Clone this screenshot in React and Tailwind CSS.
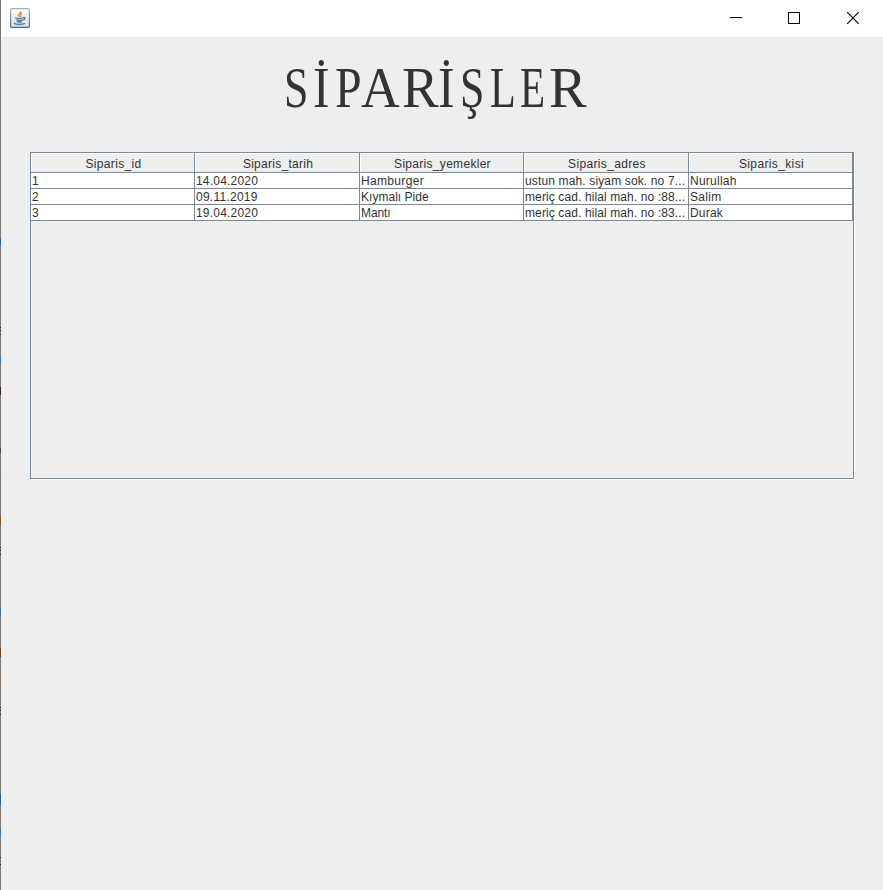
const title = [
  ["S", "w-[29px]", "scale-x-[0.77]"],
  ["İ", "w-[22px]", "scale-x-[0.87]"],
  ["P", "w-[26px]", "scale-x-[0.84]"],
  ["A", "w-[41px]", "scale-x-[0.94]"],
  ["R", "w-[36px]", "scale-x-[0.96]"],
  ["İ", "w-[22px]", "scale-x-[0.87]"],
  ["Ş", "w-[30px]", "scale-x-[0.77]"],
  ["L", "w-[30px]", "scale-x-[0.74]"],
  ["E", "w-[29px]", "scale-x-[0.72]"],
  ["R", "w-[38px]", "scale-x-[0.99]"],
];

const headers = [
  ["Siparis_id", "tracking-[0.35px]"],
  ["Siparis_tarih", "tracking-[0.27px]"],
  ["Siparis_yemekler", "tracking-[0.3px]"],
  ["Siparis_adres", "tracking-[0.35px]"],
  ["Siparis_kisi", "tracking-[0.37px]"],
];

const rows = [
  [["1", ""], ["14.04.2020", "tracking-[0.2px]"], ["Hamburger", "tracking-[0.33px]"], ["ustun mah. siyam sok. no 7...", "tracking-[0.14px]"], ["Nurullah", "tracking-[0.25px]"]],
  [["2", ""], ["09.11.2019", "tracking-[0.25px]"], ["Kıymalı Pide", "tracking-[0.03px]"], ["meriç cad. hilal mah. no :88...", "tracking-[0.11px]"], ["Salim", "tracking-[0.3px]"]],
  [["3", ""], ["19.04.2020", "tracking-[0.2px]"], ["Mantı", "tracking-[-0.1px]"], ["meriç cad. hilal mah. no :83...", "tracking-[0.11px]"], ["Durak", "tracking-[0.2px]"]],
];

// Slivers of the window behind, showing along the left edge: [gap above, height, colour].
const edgeMarks = [
  ["mt-[238px]", "h-[7px]", "bg-[#2f5f92]"],
  ["mt-[82px]", "h-px", "bg-[#222222]"],
  ["mt-[2px]", "h-px", "bg-[#222222]"],
  ["mt-[3px]", "h-px", "bg-[#222222]"],
  ["mt-[22px]", "h-[7px]", "bg-[#3f7095]"],
  ["mt-[23px]", "h-[8px]", "bg-[#431f3d]"],
  ["mt-[53px]", "h-[2px]", "bg-[#66401f]"],
  ["mt-0", "h-[3px]", "bg-[#244f7c]"],
  ["mt-[24px]", "h-px", "bg-[#8b6936]"],
  ["mt-[36px]", "h-px", "bg-[#8b5a26]"],
  ["mt-[2px]", "h-[8px]", "bg-[#80501f]"],
  ["mt-[22px]", "h-px", "bg-[#222222]"],
  ["mt-[2px]", "h-px", "bg-[#222222]"],
  ["mt-[3px]", "h-px", "bg-[#222222]"],
  ["mt-[53px]", "h-[7px]", "bg-[#3f6c9b]"],
  ["mt-[33px]", "h-[8px]", "bg-[#704a20]"],
  ["mt-0", "h-px", "bg-[#203f70]"],
  ["mt-[23px]", "h-[3px]", "bg-[#9a7439]"],
  ["mt-[24px]", "h-px", "bg-[#222222]"],
  ["mt-[2px]", "h-px", "bg-[#222222]"],
  ["mt-[3px]", "h-px", "bg-[#222222]"],
  ["mt-[79px]", "h-[11px]", "bg-[#315f8d]"],
  ["mt-[23px]", "h-[7px]", "bg-[#3f6c9b]"],
  ["mt-[22px]", "h-px", "bg-[#222222]"],
  ["mt-[6px]", "h-px", "bg-[#222222]"],
];

const columns = "grid grid-cols-[164px_165px_164px_165px_164px]";

function JavaIcon() {
  return (
    <svg width="20" height="20" viewBox="0 0 20 20">
      <defs>
        <linearGradient id="tile" x1="0" y1="0" x2="0" y2="1">
          <stop offset="0" stopColor="#ffffff" />
          <stop offset="1" stopColor="#d3dde6" />
        </linearGradient>
        <linearGradient id="edge" x1="0" y1="0" x2="0" y2="1">
          <stop offset="0" stopColor="#a5b3c0" />
          <stop offset="1" stopColor="#47708f" />
        </linearGradient>
      </defs>
      <rect x="0.6" y="0.6" width="18.8" height="18.8" rx="1.5" fill="url(#tile)" stroke="url(#edge)" strokeWidth="1.2" />
      <path d="M10.8 3.2c.7 2-3 2.5-2.4 4.2.2.6.8 1 1.3 1.5M11.8 5.2c-2 1.2-1.5 2-.9 2.6.3.4-.1.9-.5 1.2" fill="none" stroke="#ee8b43" strokeWidth="1.5" />
      <path d="M5.2 9.9c2 .8 5.7.8 8.3 0M6.3 11.8c2 .8 4.8.8 6.5 0M7 13.6c1.7.6 3.7.6 5 0M13.3 9.5c2.5-.4 2 2-.2 2.7M3.8 15.2c2 1.5 9 1.5 11.2 0" fill="none" stroke="#507b9c" strokeWidth="1.3" />
    </svg>
  );
}

function TitleBar() {
  return (
    <header className="flex h-[37px] shrink-0 items-start bg-white pl-[9px] pt-2">
      <JavaIcon />
      <svg className="ml-auto mr-[23px]" width="130" height="20" viewBox="0 0 130 20" fill="none" stroke="#000">
        <path d="M0.4 9.5h12" shapeRendering="crispEdges" />
        <path d="M58.5 4.5h11v11h-11z" shapeRendering="crispEdges" />
        <path d="M117.2 4.2l11.6 11.6M128.8 4.2l-11.6 11.6" strokeWidth="1.1" />
      </svg>
    </header>
  );
}

export default function App() {
  return (
    <div className="flex h-[890px] w-[883px] overflow-hidden text-[#333333]">
      <div className="w-px shrink-0 bg-[#777777]">
        <div className="flex flex-col">
          {edgeMarks.map(([gap, height, color], i) => (
            <div key={i} className={`w-px shrink-0 ${gap} ${height} ${color}`} />
          ))}
        </div>
      </div>
      <div className="flex w-[882px] flex-col bg-[#eeeeee]">
        <TitleBar />
        <main className="flex-1">
          <h1 className="flex h-[115px] pl-[283px] pt-[19px] font-['Liberation_Serif',serif] text-[57px] leading-[64px]">
            {title.map(([char, width, scale], i) => (
              <span key={i} className={`shrink-0 ${width}`}>
                <span className={`inline-block origin-left ${scale}`}>{char}</span>
              </span>
            ))}
          </h1>
          <section className="ml-[29px] h-[327px] w-[824px] border border-[#7a8a99] font-['Liberation_Sans',Arial,sans-serif] text-[12px] shadow-[1px_1px_0_#ffffff]">
            <div className="w-[822px]">
              <div className={columns}>
                {headers.map(([label, spacing]) => (
                  <div key={label} className="h-[20px] border-b border-r border-[#7a8a99]">
                    <div className={`h-[19px] whitespace-nowrap border-l border-t border-white pl-px text-center leading-[20px] ${spacing}`}>
                      {label}
                    </div>
                  </div>
                ))}
              </div>
              {rows.map((row) => (
                <div key={row[0][0]} className={columns}>
                  {row.map(([value, spacing]) => (
                    <div key={value} className={`h-4 overflow-hidden whitespace-nowrap border-b border-r border-[#7a8a99] bg-white pl-px leading-[17px] ${spacing}`}>
                      {value}
                    </div>
                  ))}
                </div>
              ))}
            </div>
          </section>
        </main>
      </div>
    </div>
  );
}
